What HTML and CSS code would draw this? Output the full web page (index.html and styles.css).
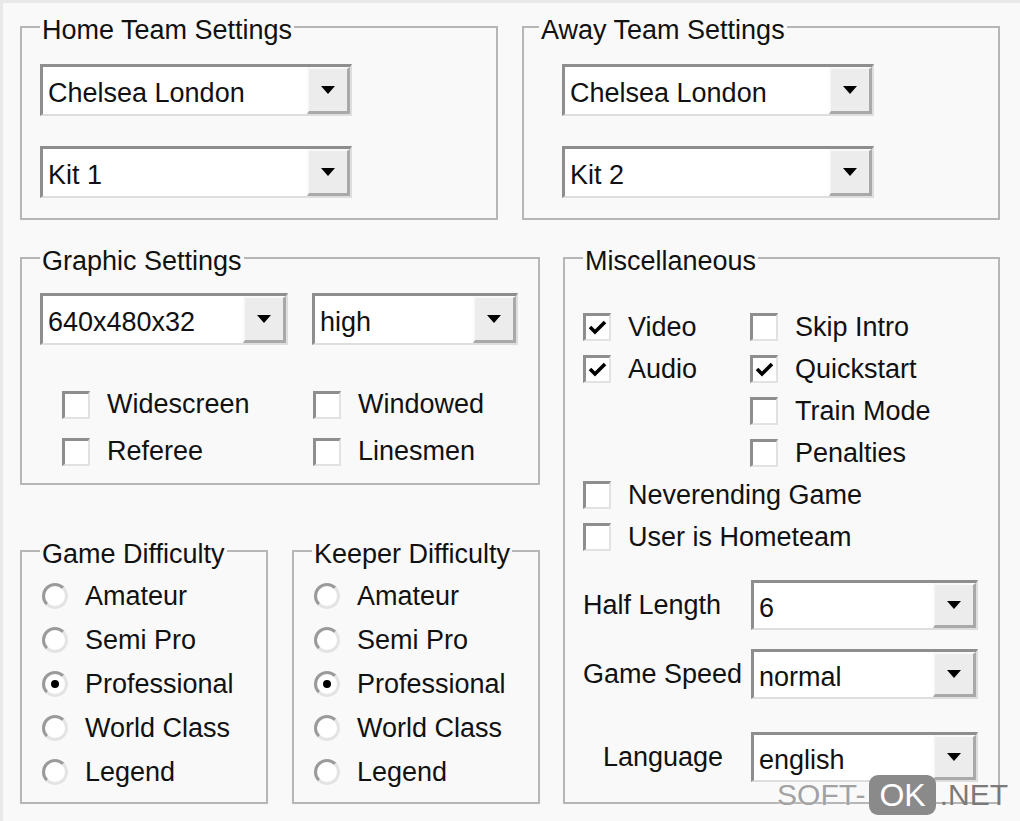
FILE: index.html
```html
<!DOCTYPE html>
<html lang="en">
<head>
    <meta charset="UTF-8">
    <title>Game Settings</title>
    <link rel="stylesheet" href="styles.css">
</head>
<body>
    <div class="dialog">
        <div class="top-row">
            <fieldset class="group team">
                <legend>Home Team Settings</legend>
                <div class="combo wide"><span class="value">Chelsea London</span><span class="combo-btn"><i class="arrow"></i></span></div>
                <div class="combo wide"><span class="value">Kit 1</span><span class="combo-btn"><i class="arrow"></i></span></div>
            </fieldset>
            <fieldset class="group team away">
                <legend>Away Team Settings</legend>
                <div class="combo wide"><span class="value">Chelsea London</span><span class="combo-btn"><i class="arrow"></i></span></div>
                <div class="combo wide"><span class="value">Kit 2</span><span class="combo-btn"><i class="arrow"></i></span></div>
            </fieldset>
        </div>

        <div class="bottom-row">
            <div class="left-col">
                <fieldset class="group graphic">
                    <legend>Graphic Settings</legend>
                    <div class="graphic-combos">
                        <div class="combo res"><span class="value">640x480x32</span><span class="combo-btn"><i class="arrow"></i></span></div>
                        <div class="combo detail"><span class="value">high</span><span class="combo-btn"><i class="arrow"></i></span></div>
                    </div>
                    <div class="graphic-checks">
                        <label class="check"><span class="box"></span>Widescreen</label>
                        <label class="check"><span class="box"></span>Windowed</label>
                        <label class="check"><span class="box"></span>Referee</label>
                        <label class="check"><span class="box"></span>Linesmen</label>
                    </div>
                </fieldset>

                <div class="difficulty-row">
                    <fieldset class="group difficulty">
                        <legend>Game Difficulty</legend>
                        <div class="radio"><span class="dot"></span>Amateur</div>
                        <div class="radio"><span class="dot"></span>Semi Pro</div>
                        <div class="radio"><span class="dot on"></span>Professional</div>
                        <div class="radio"><span class="dot"></span>World Class</div>
                        <div class="radio"><span class="dot"></span>Legend</div>
                    </fieldset>
                    <fieldset class="group difficulty">
                        <legend>Keeper Difficulty</legend>
                        <div class="radio"><span class="dot"></span>Amateur</div>
                        <div class="radio"><span class="dot"></span>Semi Pro</div>
                        <div class="radio"><span class="dot on"></span>Professional</div>
                        <div class="radio"><span class="dot"></span>World Class</div>
                        <div class="radio"><span class="dot"></span>Legend</div>
                    </fieldset>
                </div>
            </div>

            <fieldset class="group misc">
                <legend>Miscellaneous</legend>
                <div class="misc-checks">
                    <label class="check"><span class="box"><svg viewBox="0 0 23 23"><polyline points="4,11 9,16 19,6"/></svg></span>Video</label>
                    <label class="check"><span class="box"></span>Skip Intro</label>
                    <label class="check"><span class="box"><svg viewBox="0 0 23 23"><polyline points="4,11 9,16 19,6"/></svg></span>Audio</label>
                    <label class="check"><span class="box"><svg viewBox="0 0 23 23"><polyline points="4,11 9,16 19,6"/></svg></span>Quickstart</label>
                    <span></span>
                    <label class="check"><span class="box"></span>Train Mode</label>
                    <span></span>
                    <label class="check"><span class="box"></span>Penalties</label>
                    <label class="check full"><span class="box"></span>Neverending Game</label>
                    <label class="check full"><span class="box"></span>User is Hometeam</label>
                </div>

                <div class="field first">
                    <span class="field-label">Half Length</span>
                    <div class="combo small"><span class="value">6</span><span class="combo-btn"><i class="arrow"></i></span></div>
                </div>
                <div class="field second">
                    <span class="field-label">Game Speed</span>
                    <div class="combo small"><span class="value">normal</span><span class="combo-btn"><i class="arrow"></i></span></div>
                </div>
                <div class="field third">
                    <span class="field-label indent">Language</span>
                    <div class="combo small"><span class="value">english</span><span class="combo-btn"><i class="arrow"></i></span></div>
                </div>
            </fieldset>
        </div>

        <div class="watermark">
            <span class="wm-soft">SOFT-</span><span class="wm-ok">OK</span><span class="wm-net">.NET</span>
        </div>
    </div>
</body>
</html>
```

FILE: styles.css
```css
body {
    margin: 0;
    font-family: "Liberation Sans", Arial, sans-serif;
    font-size: 27px;
    color: #111;
    background: #f9f9f9;
}
.dialog {
    position: relative;
    height: 821px;
    box-sizing: border-box;
    padding: 9px 20px 0 20px;
    box-shadow: inset 3px 3px 0 #e9e9e9;
}

/* group boxes */
.group {
    margin: 0;
    min-width: 0;
    border: 2px solid #b6b6b6;
    padding: 0 18px;
}
.group legend {
    padding: 6px 2px 0;
    line-height: 30px;
    white-space: nowrap;
}
.top-row {
    display: grid;
    grid-template-columns: 478px 478px;
    column-gap: 24px;
}
.team {
    padding-top: 19px;
    padding-bottom: 20px;
}
.team .combo + .combo {
    margin-top: 30px;
}
.away legend {
    margin-left: -3px;
}
.away .combo {
    margin-left: 20px;
}
.bottom-row {
    display: grid;
    grid-template-columns: 520px 437px;
    column-gap: 23px;
    margin-top: 20px;
}
.left-col {
    display: flex;
    flex-direction: column;
}

/* combo boxes */
.combo {
    display: flex;
    box-sizing: border-box;
    height: 52px;
    background: #fff;
    border-top: 3px solid #8e8e8e;
    border-left: 3px solid #8e8e8e;
    border-right: 2px solid #dedede;
    border-bottom: 2px solid #dedede;
}
.combo .value {
    flex: 1;
    padding: 5px 0 0 5px;
    line-height: 42px;
    white-space: nowrap;
    overflow: hidden;
}
.combo-btn {
    width: 38px;
    display: flex;
    align-items: center;
    justify-content: center;
    background: #ececec;
    border-top: 2px solid #f9f9f9;
    border-left: 2px solid #f9f9f9;
    border-right: 3px solid #a9a9a9;
    border-bottom: 3px solid #a9a9a9;
}
.arrow {
    width: 0;
    height: 0;
    border-left: 7px solid transparent;
    border-right: 7px solid transparent;
    border-top: 8px solid #000;
}
.wide {
    width: 312px;
}
.res {
    width: 248px;
}
.detail {
    width: 206px;
}
.small {
    width: 227px;
    height: 50px;
}
.small .value {
    line-height: 40px;
}

/* graphic settings */
.graphic {
    padding-top: 17px;
    padding-bottom: 8px;
}
.graphic-combos {
    display: flex;
    gap: 24px;
}
.graphic-checks {
    display: grid;
    grid-template-columns: 251px 1fr;
    grid-auto-rows: 47px;
    margin-top: 36px;
    padding-left: 22px;
}

/* checkboxes */
.check {
    display: flex;
    align-items: center;
    gap: 17px;
    white-space: nowrap;
}
.box {
    flex: none;
    box-sizing: border-box;
    width: 28px;
    height: 28px;
    background: #fff;
    border-top: 3px solid #8e8e8e;
    border-left: 3px solid #8e8e8e;
    border-right: 2px solid #e2e2e2;
    border-bottom: 2px solid #e2e2e2;
}
.box svg {
    display: block;
    width: 23px;
    height: 23px;
}
.box polyline {
    fill: none;
    stroke: #000;
    stroke-width: 3.6;
}

/* difficulty radios */
.difficulty-row {
    display: grid;
    grid-template-columns: 248px 248px;
    column-gap: 24px;
    margin-top: 48px;
}
.difficulty {
    padding-top: 5px;
    padding-bottom: 8px;
}
.radio {
    display: flex;
    align-items: center;
    gap: 17px;
    height: 44px;
    padding-left: 2px;
    white-space: nowrap;
}
.dot {
    flex: none;
    box-sizing: border-box;
    width: 26px;
    height: 26px;
    border-radius: 50%;
    background: #fff;
    border: 3px solid;
    border-color: #9a9a9a #e4e4e4 #e4e4e4 #9a9a9a;
    display: flex;
    align-items: center;
    justify-content: center;
}
.dot.on::after {
    content: "";
    width: 8px;
    height: 8px;
    border-radius: 50%;
    background: #000;
}

/* miscellaneous */
.misc {
    padding-top: 30px;
}
.misc-checks {
    display: grid;
    grid-template-columns: 167px 1fr;
    grid-auto-rows: 42px;
}
.misc-checks .full {
    grid-column: 1 / 3;
}
.field {
    display: flex;
    align-items: center;
}
.field-label {
    width: 168px;
    white-space: nowrap;
}
.field-label.indent {
    padding-left: 20px;
    box-sizing: border-box;
}
.field.first {
    margin-top: 22px;
}
.field.second {
    margin-top: 19px;
}
.field.third {
    margin-top: 33px;
}

/* site watermark */
.watermark {
    position: absolute;
    right: 12px;
    bottom: 6px;
    display: flex;
    align-items: center;
    font-size: 30px;
    line-height: 40px;
}
.wm-soft {
    color: #a2a2a2;
    text-shadow: 0 0 2px #fff;
}
.wm-ok {
    margin-left: 4px;
    padding: 0 10px;
    background: #8a8a8a;
    color: #fff;
    border-radius: 9px;
    font-size: 32px;
}
.wm-net {
    margin-left: 4px;
    color: #7a7a7a;
}
```
